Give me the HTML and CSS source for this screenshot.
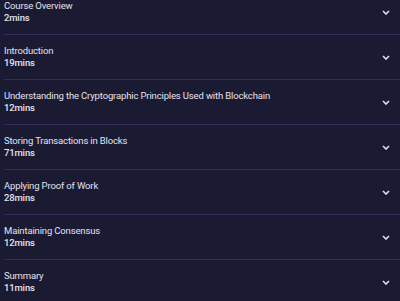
FILE: index.html
```html
<!DOCTYPE html>
<html lang="en">
<head>
    <meta charset="UTF-8">
    <title>Course Contents</title>
    <link rel="stylesheet" href="styles.css">
</head>
<body>
    <div class="modules">
        <div class="module">
            <div class="info">
                <p class="title">Course Overview</p>
                <p class="time">2mins</p>
            </div>
            <svg class="chevron" viewBox="0 0 8 5"><path d="M1 1l3 3 3-3"/></svg>
        </div>
        <div class="module">
            <div class="info">
                <p class="title">Introduction</p>
                <p class="time">19mins</p>
            </div>
            <svg class="chevron" viewBox="0 0 8 5"><path d="M1 1l3 3 3-3"/></svg>
        </div>
        <div class="module">
            <div class="info">
                <p class="title">Understanding the Cryptographic Principles Used with Blockchain</p>
                <p class="time">12mins</p>
            </div>
            <svg class="chevron" viewBox="0 0 8 5"><path d="M1 1l3 3 3-3"/></svg>
        </div>
        <div class="module">
            <div class="info">
                <p class="title">Storing Transactions in Blocks</p>
                <p class="time">71mins</p>
            </div>
            <svg class="chevron" viewBox="0 0 8 5"><path d="M1 1l3 3 3-3"/></svg>
        </div>
        <div class="module">
            <div class="info">
                <p class="title">Applying Proof of Work</p>
                <p class="time">28mins</p>
            </div>
            <svg class="chevron" viewBox="0 0 8 5"><path d="M1 1l3 3 3-3"/></svg>
        </div>
        <div class="module">
            <div class="info">
                <p class="title">Maintaining Consensus</p>
                <p class="time">12mins</p>
            </div>
            <svg class="chevron" viewBox="0 0 8 5"><path d="M1 1l3 3 3-3"/></svg>
        </div>
        <div class="module">
            <div class="info">
                <p class="title">Summary</p>
                <p class="time">11mins</p>
            </div>
            <svg class="chevron" viewBox="0 0 8 5"><path d="M1 1l3 3 3-3"/></svg>
        </div>
    </div>
</body>
</html>
```

FILE: styles.css
```css
*{
    margin:0;
    padding:0;
    box-sizing:border-box;
}
body{
    background:#1b1a33;
    font-family:Roboto, "Liberation Sans", sans-serif;
    color:#e2e2ee;
    overflow:hidden;
}
.modules{
    margin-top:-10px;
    padding-left:4px;
}
.module{
    display:flex;
    align-items:center;
    justify-content:space-between;
    height:45px;
    padding:10px 10px 10px 0;
    border-bottom:1px solid #2f2e58;
}
.title, .time{
    font-size:9.5px;
    line-height:12px;
    letter-spacing:-0.15px;
}
.time{
    font-weight:500;
}
.chevron{
    width:8px;
    height:5px;
    fill:none;
    stroke:#e2e2ee;
    stroke-width:1.6;
}
```
